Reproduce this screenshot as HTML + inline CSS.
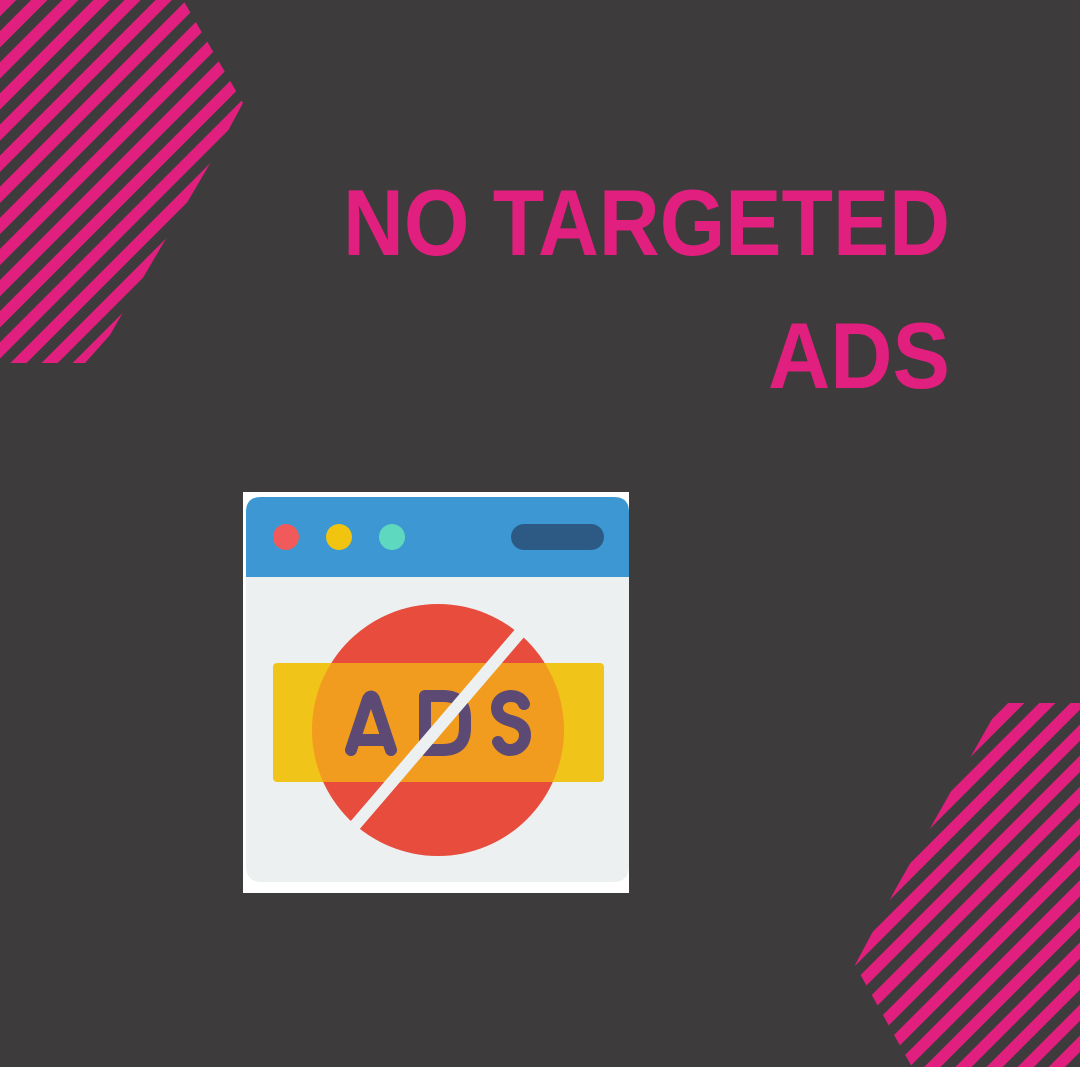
<!DOCTYPE html>
<html><head><style>html,body{margin:0;padding:0;background:#3e3b3c;}svg{display:block}</style></head>
<body>
<svg width="1080" height="1067" viewBox="0 0 1080 1067" xmlns="http://www.w3.org/2000/svg">
<defs>
<pattern id="st" patternUnits="userSpaceOnUse" width="22" height="22" patternTransform="rotate(-45)">
<rect x="0" y="0" width="22" height="11.5" fill="#e01f7e"/>
</pattern>
<clipPath id="c1"><polygon points="0,0 183,0 243,103 215,155 130,300 110,335 85,363 0,363"/></clipPath>
<clipPath id="c2"><polygon points="1003,703 1080,703 1080,1067 912,1067 855,965 895,890 1000,705"/></clipPath>
</defs>
<rect width="1080" height="1067" fill="#3e3b3c"/>
<rect x="0" y="0" width="260" height="370" fill="url(#st)" clip-path="url(#c1)"/>
<rect x="840" y="700" width="240" height="367" fill="url(#st)" clip-path="url(#c2)"/>
<g font-family="Liberation Sans, sans-serif" font-weight="bold" font-size="94" fill="#e01f7e">
<text x="343" y="255" textLength="607" lengthAdjust="spacingAndGlyphs">NO TARGETED</text>
<text x="768" y="388" textLength="182" lengthAdjust="spacingAndGlyphs">ADS</text>
</g>
<rect x="243" y="492" width="386" height="401" fill="#ffffff"/>
<path d="M246 577 V512 Q246 497 261 497 H614 Q629 497 629 512 V577 Z" fill="#3d97d3"/>
<path d="M246 577 H629 V866 Q629 882 613 882 H262 Q246 882 246 866 Z" fill="#ecf0f1"/>
<circle cx="286" cy="537" r="13" fill="#f05a5a"/>
<circle cx="339" cy="537" r="13" fill="#f1c40f"/>
<circle cx="392" cy="537" r="13" fill="#5fd8c0"/>
<rect x="511" y="524" width="93" height="26" rx="13" fill="#2c5a84"/>
<circle cx="438" cy="730" r="126" fill="#e74c3c"/>
<rect x="273" y="663" width="331" height="119" rx="4" fill="#f0c419"/>
<clipPath id="cc"><circle cx="438" cy="730" r="126"/></clipPath>
<rect x="273" y="663" width="331" height="119" fill="#f29c1f" clip-path="url(#cc)"/>
<g fill="none" stroke="#5c4a74" stroke-width="12" stroke-linecap="round" stroke-linejoin="round">
<path d="M351 750 L368 699 Q371 694 374 699 L391 750"/>
<path d="M358 740 H384"/>
<path d="M425 696 h18 q22 0 22 22 v10 q0 22 -22 22 h-18 z"/>
<path d="M524 704 C522 699 517 696 511 696 C503 696 497 701 497 708 C497 716 504 719 511 721 C519 723 525 727 525 735 C525 744 518 750 510 750 C504 750 500 746 498 742"/>
</g>
<line x1="524" y1="628" x2="351" y2="830" stroke="#ecf0f1" stroke-width="12"/>
</svg>
</body></html>
